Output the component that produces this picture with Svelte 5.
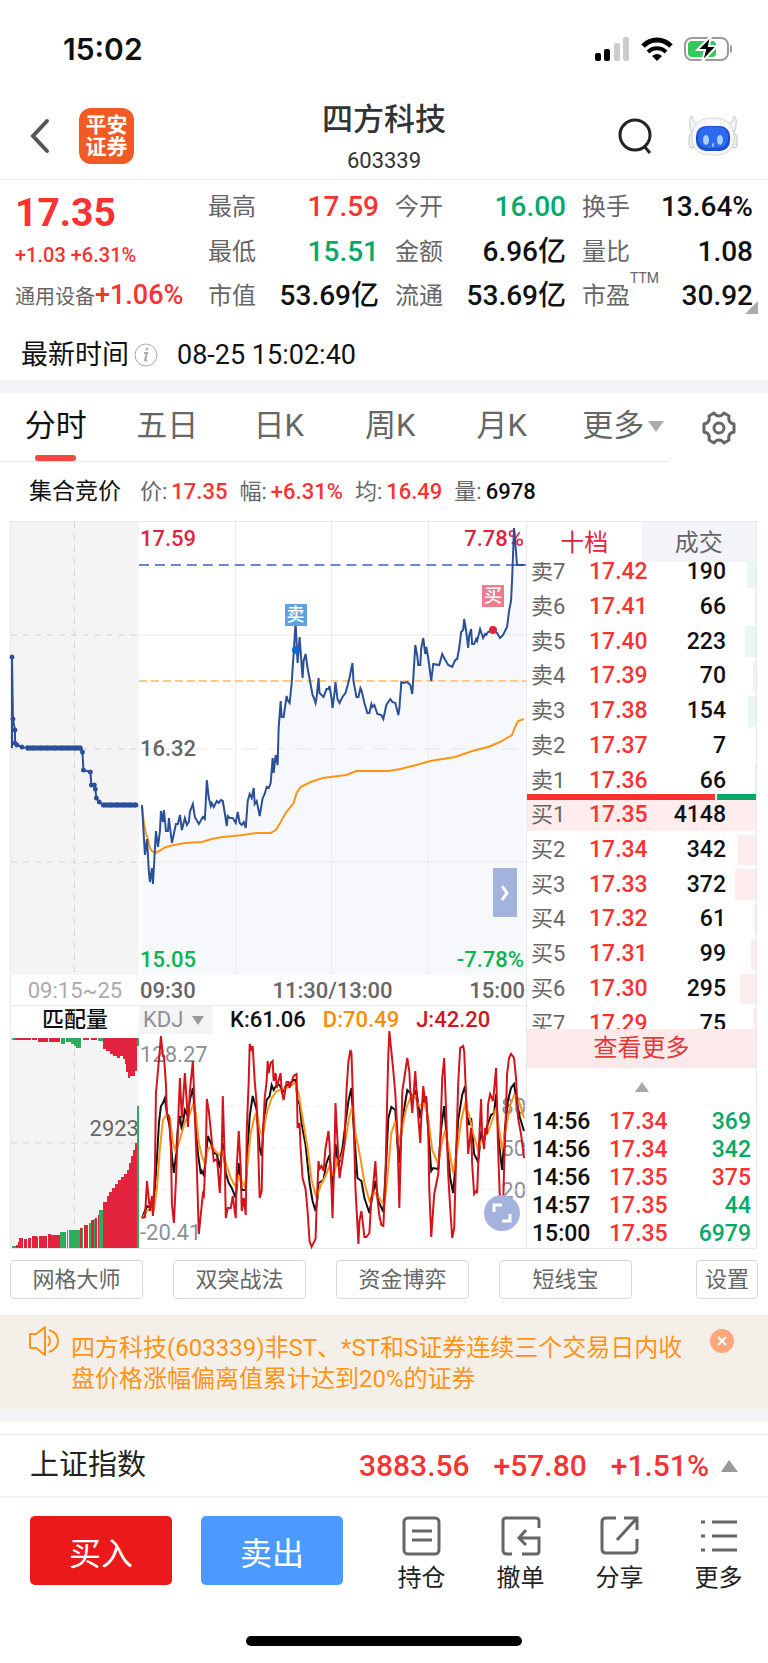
<script>
	let activeTab = $state('分时');
	let activeBook = $state('十档');
	let indicator = $state('KDJ');
	let noticeOpen = $state(true);

	const stats = [
		{ label: '最高', value: '17.59', tone: 'up' },
		{ label: '今开', value: '16.00', tone: 'down' },
		{ label: '换手', value: '13.64%' },
		{ label: '最低', value: '15.51', tone: 'down' },
		{ label: '金额', value: '6.96亿' },
		{ label: '量比', value: '1.08' },
		{ label: '市值', value: '53.69亿' },
		{ label: '流通', value: '53.69亿' },
		{ label: '市盈', value: '30.92', sup: 'TTM' }
	];

	const tabs = ['分时', '五日', '日K', '周K', '月K', '更多'];

	// depth is the bar width in percent of the panel
	const sells = [
		{ name: '卖7', price: '17.42', qty: 190, depth: 4 },
		{ name: '卖6', price: '17.41', qty: 66, depth: 1 },
		{ name: '卖5', price: '17.40', qty: 223, depth: 5 },
		{ name: '卖4', price: '17.39', qty: 70, depth: 1.5 },
		{ name: '卖3', price: '17.38', qty: 154, depth: 3.5 },
		{ name: '卖2', price: '17.37', qty: 7, depth: 0 },
		{ name: '卖1', price: '17.36', qty: 66, depth: 1 }
	];

	const buys = [
		{ name: '买1', price: '17.35', qty: 4148, depth: 100 },
		{ name: '买2', price: '17.34', qty: 342, depth: 8 },
		{ name: '买3', price: '17.33', qty: 372, depth: 9 },
		{ name: '买4', price: '17.32', qty: 61, depth: 1 },
		{ name: '买5', price: '17.31', qty: 99, depth: 2 },
		{ name: '买6', price: '17.30', qty: 295, depth: 7 },
		{ name: '买7', price: '17.29', qty: 75, depth: 1.5 }
	];

	const trades = [
		{ time: '14:56', price: '17.34', qty: 369, tone: 'down' },
		{ time: '14:56', price: '17.34', qty: 342, tone: 'down' },
		{ time: '14:56', price: '17.35', qty: 375, tone: 'up' },
		{ time: '14:57', price: '17.35', qty: 44, tone: 'down' },
		{ time: '15:00', price: '17.35', qty: 6979, tone: 'down' }
	];

	const tools = ['网格大师', '双突战法', '资金博弈', '短线宝'];

	const W = 388;
	const H = 453;

	const price =
		'3,283 5,317 6,333 8,317 10,351 11,360 13,346 14,362 16,326 17,309 19,325 21,309 22,289 24,300 25,288 27,309 29,309 30,296 33,321 37,302 39,302 41,293 43,308 46,296 48,303 50,300 51,290 54,282 56,295 60,302 64,295 66,297 67,279 68,258 70,276 72,284 73,281 75,285 78,279 80,281 82,278 84,279 86,291 88,304 89,294 91,296 94,296 97,301 99,290 101,301 103,303 105,300 107,306 109,279 111,272 113,276 115,266 116,282 118,279 121,294 124,276 126,272 128,265 130,266 132,261 134,236 135,251 137,233 139,243 140,206 142,179 143,195 145,195 148,174 149,178 151,181 153,162 155,132 157,100 159,141 161,115 164,156 165,139 167,132 169,146 172,162 174,173 175,175 177,181 178,176 180,156 181,171 185,175 188,167 190,167 191,164 193,176 194,186 196,171 197,160 199,177 201,181 204,175 207,171 209,164 211,156 214,141 215,159 218,175 220,175 222,166 223,168 226,181 229,191 231,191 233,182 234,185 236,183 239,192 243,193 245,197 248,183 252,177 254,180 257,181 260,193 261,187 263,160 265,161 269,160 272,163 274,172 275,156 277,123 279,134 280,143 282,143 283,126 285,116 287,132 288,125 290,136 293,159 295,142 301,143 304,132 306,136 310,143 314,145 317,138 319,137 321,126 323,110 325,108 326,97 328,109 330,126 331,114 333,107 334,122 336,122 338,117 339,119 342,107 345,116 347,112 348,113 350,110 355,108 359,111 362,116 365,113 369,105 371,89 373,79 374,59 376,6 377,17 379,43 386,43';

	const average =
		'3,284 5,302 7,312 9,317 11,326 13,329 16,331 20,329 27,325 35,323 46,321 63,320 73,317 84,315 104,313 118,311 132,311 137,308 141,302 147,291 152,285 155,281 158,271 162,265 172,260 184,256 208,253 218,249 250,249 262,247 278,243 292,239 317,235 334,229 350,225 362,220 374,213 377,205 380,199 386,197';

	const auction = [
		[1, 135], [2, 197], [4, 208], [4, 221], [6, 223], [11, 225], [17, 226], [23, 226], [30, 226], [37, 226],
		[44, 226], [51, 226], [58, 226], [65, 226], [70, 226], [72, 230], [73, 248], [80, 250], [81, 263], [84, 263],
		[85, 267], [86, 276], [89, 280], [93, 283], [100, 283], [107, 283], [114, 283], [120, 283], [126, 283]
	];

	const lineK =
		'3,180 8,168 11,170 15,165 18,120 20,85 22,68 24,65 26,60 28,75 31,90 33,118 35,135 37,118 39,90 41,78 43,92 46,72 49,78 51,62 54,50 56,75 59,115 62,136 63,133 65,137 67,120 69,98 72,105 75,115 78,116 81,130 84,105 87,135 90,145 93,150 97,160 100,125 103,152 107,152 109,110 111,78 114,58 118,72 121,110 123,118 125,85 128,62 131,58 133,47 135,52 138,47 141,47 144,54 147,48 151,46 155,42 157,42 159,63 161,66 163,85 167,107 171,145 174,163 177,173 179,160 180,145 185,142 188,125 191,117 194,150 197,106 200,128 204,110 208,78 210,63 213,50 215,85 219,140 223,143 226,160 231,175 234,158 237,143 240,163 245,174 248,120 250,80 253,69 257,72 259,105 261,125 263,95 266,70 269,52 272,55 275,60 278,52 282,80 285,62 288,65 291,105 293,133 295,130 300,131 303,90 306,68 309,105 312,140 315,155 317,130 320,82 324,57 327,48 329,78 331,87 333,80 336,116 340,124 343,96 346,103 349,88 353,77 356,75 358,56 361,105 364,132 367,90 370,62 373,50 376,46 379,65 382,80 386,93';

	const lineD =
		'3,180 9,172 15,172 18,150 21,110 24,82 28,76 31,80 34,105 37,114 39,108 42,98 46,84 50,78 54,67 57,75 60,105 63,118 66,126 69,112 72,108 76,112 80,117 84,113 88,128 92,140 97,149 100,138 103,143 106,149 109,125 112,95 116,78 118,74 121,92 124,98 128,75 133,60 138,53 144,51 150,49 156,45 160,55 164,80 169,110 173,142 178,160 182,148 187,138 191,128 195,138 199,122 203,120 207,102 211,78 214,68 217,95 222,120 226,145 231,163 236,154 241,160 246,167 249,140 253,95 257,83 260,105 264,90 268,70 272,60 276,57 281,68 286,65 290,80 294,112 300,126 303,108 307,92 311,112 315,135 319,112 323,82 327,66 331,77 335,95 340,112 344,101 349,96 354,83 358,70 361,90 364,112 368,90 372,68 376,57 380,60 386,80';

	const lineJ =
		'3,180 6,179 8,143 10,163 11,173 13,158 14,178 16,130 17,55 19,33 21,10 22,-2 24,18 25,18 27,46 28,76 30,78 32,110 33,166 35,185 37,143 38,116 41,40 43,80 46,35 48,66 49,89 51,53 53,33 54,23 56,76 58,130 60,196 62,176 64,156 65,158 67,116 68,61 70,73 72,93 75,123 78,121 79,130 81,155 83,110 84,58 86,123 87,180 89,170 92,170 94,158 97,180 98,130 100,93 102,130 103,173 105,160 107,177 108,93 110,43 111,6 113,13 114,8 116,43 118,66 119,93 121,160 123,153 124,103 126,60 128,43 129,23 130,35 132,25 134,23 135,43 137,35 138,50 142,35 143,53 145,62 148,44 150,44 151,50 155,38 158,36 159,90 161,85 162,110 164,140 167,151 169,173 171,203 173,209 177,201 178,170 180,123 181,131 183,128 185,133 187,110 190,93 191,106 193,150 194,180 196,116 197,65 199,103 201,140 204,121 206,106 208,53 210,23 212,12 213,15 215,76 217,150 220,206 221,183 223,173 226,199 228,199 231,195 233,160 234,156 237,123 239,160 241,178 243,187 245,188 247,143 249,53 250,16 251,-7 253,13 255,33 257,56 259,93 261,170 263,93 264,53 266,40 269,20 271,33 272,53 274,75 277,33 279,66 282,105 283,80 285,48 287,65 288,58 290,93 291,150 293,199 295,170 296,156 300,136 302,103 304,40 306,20 308,76 310,136 312,170 314,200 316,190 318,116 320,46 322,10 325,8 326,13 328,60 330,116 333,90 334,126 336,156 338,153 339,155 341,103 343,61 344,96 346,111 347,90 349,96 350,66 352,56 355,63 358,30 360,110 362,166 365,173 366,130 368,70 369,36 371,20 373,16 376,20 378,40 380,80 383,96 386,120';

	// matched volume: x, width, height, colour
	const RED = '#e2233e';
	const GREEN = '#2eae5c';
	const matched = [
		[1, 4, 2, GREEN], [5, 2, 3, RED], [7, 2, 6, RED], [8, 4, 10, RED], [13, 3, 9, RED], [17, 3, 10, RED],
		[21, 5, 12, RED], [26, 1, 11, RED], [28, 8, 12, RED], [37, 3, 14, RED], [40, 9, 13, RED], [49, 6, 16, GREEN],
		[56, 1, 18, GREEN], [58, 12, 18, GREEN], [70, 2, 20, RED], [72, 1, 20, GREEN], [74, 4, 23, RED],
		[79, 2, 25, GREEN], [81, 3, 28, RED], [84, 1, 29, GREEN], [85, 2, 30, RED], [88, 1, 33, RED], [89, 4, 38, GREEN],
		[93, 4, 46, RED], [97, 2, 52, RED], [99, 3, 56, RED], [102, 3, 60, RED], [105, 3, 64, RED], [108, 3, 68, RED],
		[111, 3, 71, RED], [114, 3, 74, RED], [117, 2, 78, RED], [119, 2, 85, RED], [121, 2, 92, RED],
		[123, 2, 98, RED], [125, 2, 105, RED], [127, 2, 142, GREEN]
	];
	const unmatched = [
		[1, 3, 2, GREEN], [4, 16, 2, RED], [21, 5, 2, RED], [27, 10, 4, RED], [38, 11, 4, RED], [50, 4, 6, GREEN],
		[55, 5, 4, GREEN], [60, 3, 6, GREEN], [63, 3, 8, GREEN], [66, 5, 10, GREEN], [73, 6, 2, RED], [81, 6, 2, RED],
		[88, 5, 3, GREEN], [93, 3, 11, RED], [96, 4, 13, RED], [100, 3, 16, RED], [103, 4, 18, RED], [107, 3, 20, RED],
		[110, 3, 18, RED], [113, 2, 21, RED], [115, 1, 26, RED], [116, 2, 34, RED], [118, 2, 40, RED], [120, 5, 38, RED],
		[125, 2, 33, RED], [127, 2, 8, GREEN]
	];

	const markers = [
		{ text: '卖', kind: 'sell', x: 157, top: 82, dot: 128 },
		{ text: '买', kind: 'buy', x: 355, top: 63, dot: 108 }
	];
</script>

{#snippet book(rows, side)}
	<table class="levels">
		<tbody>
			{#each rows as row}
				<tr>
					<th scope="row">{row.name}</th>
					<td class="price up">{row.price}</td>
					<td class="qty">
						{row.qty}
						<span class="depth {side}" style="width: {row.depth}%"></span>
					</td>
				</tr>
			{/each}
		</tbody>
	</table>
{/snippet}

<div class="page">
	<div class="status">
		<span class="clock">15:02</span>
		<span class="status-icons">
			<svg width="35" height="24" viewBox="0 0 35 24">
				<rect x="0" y="16" width="6" height="8" rx="2" />
				<rect x="9" y="12" width="6" height="12" rx="2" />
				<rect x="19" y="6" width="6" height="18" rx="2" fill="#ccc" />
				<rect x="28" y="0" width="6" height="24" rx="2" fill="#ccc" />
			</svg>
			<svg width="32" height="24" viewBox="0 0 32 24">
				<path d="M2 9C10 1 22 1 30 9" fill="none" stroke="#000" stroke-width="5" />
				<path d="M7 15C12 10 20 10 25 15" fill="none" stroke="#000" stroke-width="4" />
				<path d="M16 24L11 19Q16 15 21 19Z" />
			</svg>
			<svg width="48" height="26" viewBox="0 0 48 26">
				<rect x="1" y="2" width="43" height="22" rx="7" fill="none" stroke="#9b9b9b" stroke-width="2" />
				<rect x="4" y="5" width="28" height="16" rx="4" fill="#34c759" />
				<path d="M46 9Q49 10 49 13T46 17Z" fill="#9b9b9b" />
				<path d="M27 0L13 14H21L18 26L33 10H25Z" stroke="#fff" stroke-width="2" />
			</svg>
		</span>
	</div>

	<header>
		<div class="head-side">
			<button class="plain" aria-label="返回">
				<svg width="20" height="36" viewBox="0 0 20 36" fill="none" stroke="#555" stroke-width="4" stroke-linecap="round">
					<path d="M17 3L3 18L17 33" />
				</svg>
			</button>
			<div class="brand">平安<br />证券</div>
		</div>
		<div class="title">
			<h1>四方科技</h1>
			<p>603339</p>
		</div>
		<div class="head-side end">
			<button class="plain" aria-label="搜索">
				<svg width="36" height="38" viewBox="0 0 36 38" fill="none" stroke="#222" stroke-width="3">
					<circle cx="18" cy="18" r="15" />
					<path d="M27 29L33 36" />
				</svg>
			</button>
			<button class="plain" aria-label="助手">
				<svg width="50" height="42" viewBox="0 0 50 42">
					<path d="M4 18C0 8 2 2 4 1C5 7 7 9 12 8L10 20ZM46 18C50 8 48 2 46 1C45 7 43 9 38 8L40 20Z" fill="#f4f4f6" stroke="#c6c8ce" />
					<rect x="1" y="19" width="6" height="14" rx="3" fill="#ececef" stroke="#c4c6cc" />
					<rect x="43" y="19" width="6" height="14" rx="3" fill="#ececef" stroke="#c4c6cc" />
					<path d="M25 3C37 3 46 8 46 22C46 36 38 40 25 40S4 36 4 22C4 8 13 3 25 3Z" fill="#f8f8fa" stroke="#d6d7dd" />
					<rect x="8" y="11" width="34" height="25" rx="10" fill="#1d4fd0" />
					<rect x="10" y="12" width="30" height="21" rx="9" fill="#2c6bf0" />
					<ellipse cx="18" cy="25" rx="3" ry="5" fill="#a8d0ff" />
					<ellipse cx="32" cy="25" rx="3" ry="5" fill="#a8d0ff" />
					<ellipse cx="25" cy="30" rx="1" ry="2" fill="#a8d0ff" />
				</svg>
			</button>
		</div>
	</header>

	<section class="quote">
		<div class="last up">
			<strong>17.35</strong>
			<span class="change">+1.03 +6.31%</span>
			<span class="sector"><small>通用设备</small>+1.06%</span>
		</div>
		<dl>
			{#each stats as s}
				<div class="stat">
					<dt>{s.label}{#if s.sup}<sup>{s.sup}</sup>{/if}</dt>
					<dd class={s.tone}>{s.value}</dd>
				</div>
			{/each}
		</dl>
		<svg class="corner" width="13" height="13" viewBox="0 0 13 13"><path d="M13 0V13H0Z" fill="#aaa" /></svg>
	</section>

	<div class="updated">
		<span>最新时间</span>
		<svg width="24" height="24" viewBox="0 0 24 24" fill="none" stroke="#aaa">
			<circle cx="12" cy="12" r="11" />
			<path d="M10 10H13L11 17Q11 18 13 17" stroke-width="2" />
			<circle cx="13" cy="6" r="1" fill="#aaa" />
		</svg>
		<time>08-25 15:02:40</time>
	</div>

	<div class="band"></div>

	<div class="tabbar">
		<nav>
			{#each tabs as tab}
				<button class:active={activeTab === tab} onclick={() => (activeTab = tab)}>
					{tab}{#if tab === '更多'}<svg width="16" height="11" viewBox="0 0 16 11"><path d="M0 0H16L8 11Z" fill="#aaa" /></svg>{/if}
				</button>
			{/each}
		</nav>
		<button class="plain gear" aria-label="图表设置">
			<svg width="34" height="34" viewBox="0 0 34 34" fill="none" stroke="#666" stroke-width="3" stroke-linejoin="round">
				<path d="M12 2Q14 5 17 5T22 2L27 5Q26 10 29 12L32 13V21L29 22Q26 24 27 29L22 32Q20 29 17 29T12 32L7 29Q8 24 5 22L2 21V13L5 12Q8 10 7 5Z" />
				<circle cx="17" cy="17" r="5" />
			</svg>
		</button>
	</div>

	<div class="summary">
		<b>集合竞价</b>
		<span>价:<em class="up">17.35</em></span>
		<span>幅:<em class="up">+6.31%</em></span>
		<span>均:<em class="up">16.49</em></span>
		<span>量:<em>6978</em></span>
	</div>

	<main>
		<div class="auction">
			<div class="plot tall shaded">
				<svg viewBox="0 0 129 453" preserveAspectRatio="none">
					<path d="M64 0V453M0 113H129M0 227H129M0 340H129" stroke="#d4d4d4" stroke-dasharray="6 6" fill="none" />
					<polyline points="1,226 {auction.join(' ')}" fill="none" stroke="#2b4f98" stroke-width="2" />
					<path d="M15 226H70M93 283H126" stroke="#2b4f98" stroke-width="5" />
					{#each auction as [x, y]}
						<circle cx={x} cy={y} r="2.5" fill="#2b4f98" />
					{/each}
				</svg>
			</div>
			<div class="times light">09:15~25</div>
			<div class="subhead">匹配量</div>
			<div class="plot short shaded">
				<svg viewBox="0 0 129 210" preserveAspectRatio="none" shape-rendering="crispEdges">
					<path d="M64 0V210M0 105H129" stroke="#d4d4d4" stroke-dasharray="6 6" fill="none" />
					{#each matched as [x, w, h, fill]}
						<rect {x} y={210 - h} width={w} height={h} {fill} />
					{/each}
					{#each unmatched as [x, w, h, fill]}
						<rect {x} y="0" width={w} height={h} {fill} />
					{/each}
				</svg>
				<span class="tag volume">2923</span>
			</div>
		</div>

		<div class="intraday">
			<div class="plot tall">
				<span class="tag top left crimson">17.59</span>
				<span class="tag top right crimson">7.78%</span>
				<svg viewBox="0 0 {W} {H}" preserveAspectRatio="none">
					<polygon points="3,{H} {price} 386,{H}" fill="#f6f8fc" />
					<path d="M97 0V453M193 0V453M290 0V453M0 113H388M0 340H388" stroke="#ebebed" fill="none" />
					<path d="M0 227H388" stroke="#e6e6e8" stroke-dasharray="16 10" />
					<path d="M0 43H388" stroke="#6f86c4" stroke-width="2" stroke-dasharray="10 6" />
					<path d="M0 159H388" stroke="#ffcb80" stroke-width="2" stroke-dasharray="8 4" />
					<polyline points={average} fill="none" stroke="#ff9416" stroke-width="2" />
					<polyline points={price} fill="none" stroke="#2b4f98" stroke-width="2" />
				</svg>
				{#each markers as m}
					<span class="marker {m.kind}" style="left: {(m.x / W) * 100}%; top: {m.top}px">{m.text}</span>
					<span class="dot {m.kind}" style="left: {(m.x / W) * 100}%; top: {m.dot}px"></span>
				{/each}
				<span class="tag middle left">16.32</span>
				<span class="tag bottom left green">15.05</span>
				<span class="tag bottom right green">-7.78%</span>
				<button class="expand" aria-label="收起盘口">
					<svg width="8" height="16" viewBox="0 0 8 16" fill="none" stroke="#fff" stroke-width="3"><path d="M1 1L6 8L1 15" /></svg>
				</button>
			</div>
			<div class="times">
				<span>09:30</span>
				<span>11:30/13:00</span>
				<span>15:00</span>
			</div>
			<div class="subhead kdj">
				<label>
					<select bind:value={indicator} aria-label="指标">
						<option>KDJ</option>
						<option>MACD</option>
					</select>
					<svg width="12" height="9" viewBox="0 0 12 9"><path d="M0 0H12L6 9Z" fill="#999" /></svg>
				</label>
				<span>K:61.06</span>
				<span class="amber">D:70.49</span>
				<span class="red">J:42.20</span>
			</div>
			<div class="plot short">
				<span class="tag top left slate">128.27</span>
				<span class="tag bottom left slate">-20.41</span>
				<div class="scale"><span>80</span><span>50</span><span>20</span></div>
				<svg viewBox="0 0 {W} 210" preserveAspectRatio="none">
					<path d="M0 68H388M0 110H388M0 152H388" stroke="#ececec" stroke-dasharray="6 5" />
					<polyline points={lineK} fill="none" stroke="#111" stroke-width="2" />
					<polyline points={lineD} fill="none" stroke="#ff9416" stroke-width="2" />
					<polyline points={lineJ} fill="none" stroke="#d4141b" stroke-width="2" />
				</svg>
				<button class="rotate" aria-label="全屏">
					<svg width="20" height="20" viewBox="0 0 20 20" fill="none" stroke="#fff" stroke-width="3"><path d="M2 9V2H10M18 11V18H10" /></svg>
				</button>
			</div>
		</div>

		<div class="orderbook">
			<div class="booktabs">
				{#each ['十档', '成交'] as name}
					<button class:active={activeBook === name} onclick={() => (activeBook = name)}>{name}</button>
				{/each}
			</div>
			<div class="ladder">
				{@render book(sells, 'ask')}
				{@render book(buys, 'bid')}
				<div class="ratio"><i></i><i></i></div>
			</div>
			<button class="more">查看更多</button>
			<div class="fold">
				<svg width="14" height="10" viewBox="0 0 14 10"><path d="M7 0L14 10H0Z" fill="#aaa" /></svg>
			</div>
			<table class="trades">
				<tbody>
					{#each trades as t}
						<tr>
							<td>{t.time}</td>
							<td class="up">{t.price}</td>
							<td class="qty {t.tone}">{t.qty}</td>
						</tr>
					{/each}
				</tbody>
			</table>
		</div>
	</main>

	<div class="tools">
		{#each tools as tool}
			<button>{tool}</button>
		{/each}
		<button class="set">设置</button>
	</div>

	{#if noticeOpen}
		<div class="notice">
			<svg width="30" height="30" viewBox="0 0 30 30" fill="none" stroke="#ff9416" stroke-width="2" stroke-linejoin="round">
				<path d="M1 8H7L16 1V29L7 22H1Z" />
				<path d="M19 10Q23 15 19 20M20 4Q29 7 29 15T20 26" />
			</svg>
			<p>四方科技(603339)非ST、*ST和S证券连续三个交易日内收盘价格涨幅偏离值累计达到20%的证券</p>
			<button class="plain" aria-label="关闭" onclick={() => (noticeOpen = false)}>
				<svg width="24" height="24" viewBox="0 0 24 24">
					<circle cx="12" cy="12" r="12" fill="#ffa77c" />
					<path d="M8 8L16 16M16 8L8 16" stroke="#fff" stroke-width="2" />
				</svg>
			</button>
		</div>
	{/if}

	<div class="band"></div>

	<div class="index">
		<span class="name">上证指数</span>
		<span>3883.56</span>
		<span>+57.80</span>
		<span>+1.51%</span>
		<svg width="17" height="12" viewBox="0 0 17 12"><path d="M8 0L17 12H0Z" fill="#999" /></svg>
	</div>

	<footer>
		<button class="trade buy">买入</button>
		<button class="trade sell">卖出</button>
		<div class="actions">
			<button>
				<svg width="38" height="40" viewBox="0 0 38 40">
					<rect x="1" y="2" width="35" height="36" rx="4" />
					<path d="M9 15H29M9 24H29" />
				</svg>
				持仓
			</button>
			<button>
				<svg width="38" height="40" viewBox="0 0 38 40">
					<path d="M37 12V5Q37 2 34 2H4Q1 2 1 5V34Q1 38 5 38H10M20 38H34Q37 38 37 35V22H17M24 14L17 22L24 29" />
				</svg>
				撤单
			</button>
			<button>
				<svg width="38" height="40" viewBox="0 0 38 40">
					<path d="M15 2H5Q1 2 1 6V33Q1 37 5 37H32Q36 37 36 33V23M23 2H36V14M36 2L16 24" />
				</svg>
				分享
			</button>
			<button>
				<svg width="38" height="40" viewBox="0 0 38 40">
					<path d="M1 6H5M12 6H37M1 20H5M12 20H37M1 34H5M12 34H37" />
				</svg>
				更多
			</button>
		</div>
	</footer>

	<div class="home"></div>
</div>

<style>
	:global(body) {
		margin: 0;
		background: #fff;
	}

	.page {
		font-family: Roboto, 'Noto Sans CJK SC', sans-serif;
		color: #111;
		background: #fff;
		overflow: hidden;
	}

	.page :global(svg) {
		display: block;
		flex: none;
	}

	button {
		font-family: inherit;
		padding: 0;
		margin: 0;
		border: none;
		background: none;
		color: inherit;
		cursor: pointer;
	}

	h1, p, dl, dd {
		margin: 0;
	}

	table {
		width: 100%;
		border-collapse: collapse;
	}

	td, th {
		padding: 0;
	}

	.up {
		color: #fb3232;
	}

	.down {
		color: #06a968;
	}

	/* top */
	.status {
		display: flex;
		justify-content: space-between;
		align-items: center;
		height: 98px;
		padding: 0 36px 0 63px;
	}

	.clock {
		font: 600 30px/36px Inter, sans-serif;
	}

	.status-icons {
		display: flex;
		align-items: center;
		gap: 11px;
	}

	header {
		display: grid;
		grid-template-columns: 1fr auto 1fr;
		height: 81px;
		padding: 0 30px;
		border-bottom: 1px solid #ececee;
	}

	.head-side {
		display: flex;
		align-items: center;
		gap: 29px;
		height: 76px;
	}

	.head-side.end {
		justify-content: flex-end;
		gap: 35px;
	}

	.brand {
		width: 55px;
		padding: 6px 0;
		border-radius: 12px;
		background: #f15a22;
		color: #fff;
		font-weight: 700;
		font-size: 21px;
		line-height: 22px;
		text-align: center;
	}

	.title {
		text-align: center;
		color: #333;
	}

	.title h1 {
		font-size: 31px;
		font-weight: 500;
		line-height: 44px;
	}

	.title p {
		font-size: 22px;
		line-height: 38px;
	}

	/* quote */
	.quote {
		position: relative;
		display: grid;
		grid-template-columns: 177px 1fr;
		gap: 16px;
		padding: 5px 15px 0;
	}

	.last {
		display: flex;
		flex-direction: column;
	}

	.last strong {
		font-size: 39px;
		line-height: 56px;
	}

	.change {
		margin-bottom: 4px;
		font-size: 20px;
		font-weight: 500;
		line-height: 28px;
	}

	.sector {
		font-size: 27px;
		font-weight: 500;
		line-height: 44px;
		white-space: nowrap;
	}

	.sector small {
		font-size: 20px;
		font-weight: 400;
		color: #666;
	}

	dl {
		display: grid;
		grid-template-columns: repeat(3, 1fr);
		column-gap: 16px;
	}

	.stat {
		display: flex;
		justify-content: space-between;
		line-height: 44px;
	}

	dt {
		position: relative;
		font-size: 24px;
		color: #666;
	}

	dt sup {
		position: absolute;
		left: 100%;
		top: -6px;
		font-size: 14px;
		line-height: 20px;
	}

	dd {
		font-size: 28px;
		font-weight: 500;
	}

	.corner {
		position: absolute;
		right: 10px;
		bottom: 5px;
	}

	.updated {
		display: flex;
		align-items: center;
		gap: 5px;
		height: 51px;
		padding: 10px 21px 0;
		font-size: 27px;
		line-height: 50px;
	}

	.updated time {
		margin-left: 14px;
	}

	.band {
		height: 13px;
		background: #f2f4f8;
	}

	/* tabs */
	.tabbar {
		display: flex;
		height: 69px;
	}

	nav {
		flex: 1;
		display: flex;
		border-bottom: 1px solid #ececee;
	}

	nav button {
		flex: 1 1 0;
		display: flex;
		justify-content: center;
		align-items: center;
		gap: 4px;
		position: relative;
		font-size: 31px;
		line-height: 60px;
		color: #666;
		padding-bottom: 2px;
	}

	nav button.active {
		color: #111;
	}

	nav svg {
		margin-right: -20px;
	}

	nav button.active::after {
		content: '';
		position: absolute;
		bottom: 0;
		width: 41px;
		height: 6px;
		border-radius: 3px;
		background: #fb4343;
	}

	.gear {
		width: 99px;
		display: flex;
		justify-content: center;
		align-items: center;
	}

	.summary {
		display: flex;
		gap: 12px;
		height: 59px;
		padding-left: 29px;
		font-size: 22px;
		line-height: 60px;
		color: #666;
	}

	.summary b {
		font-size: 23px;
		font-weight: 400;
		color: #111;
		margin-right: 7px;
	}

	.summary em {
		font-style: normal;
		font-weight: 500;
		margin-left: 4px;
	}

	.summary em:not(.up) {
		color: #111;
	}

	/* charts */
	main {
		display: grid;
		grid-template-columns: 129fr 388fr 230fr;
		margin: 0 11px 0 10px;
		border: 1px solid #e8e8ea;
		border-width: 1px 0;
	}

	main > div {
		min-width: 0;
	}

	.plot {
		position: relative;
	}

	.plot > svg {
		position: relative;
		width: 100%;
		height: 100%;
		overflow: visible;
	}

	.tall {
		height: 453px;
	}

	.short {
		height: 210px;
	}

	.shaded {
		background: #f4f4f4;
	}

	.auction {
		border-left: 1px solid #e8e8ea;
	}

	.tag {
		position: absolute;
		font-size: 22px;
		line-height: 28px;
		font-weight: 500;
		color: #666;
	}

	.left {
		left: 1px;
	}

	.right {
		right: 2px;
	}

	.top {
		top: 3px;
	}

	.middle {
		top: 213px;
	}

	.bottom {
		bottom: 1px;
	}

	.crimson {
		color: #e2233e;
	}

	.green {
		color: #0cb44f;
	}

	.slate {
		color: #8e8e99;
		font-weight: 400;
	}

	.volume {
		right: 0;
		top: 77px;
		font-weight: 400;
	}

	.marker {
		position: absolute;
		width: 22px;
		margin-left: -11px;
		background: #5ea2e2;
		color: #fff;
		font-size: 18px;
		font-weight: 500;
		line-height: 22px;
		text-align: center;
	}

	.marker.buy {
		background: #ef7c8e;
	}

	.dot {
		position: absolute;
		width: 8px;
		height: 8px;
		margin: -4px 0 0 -4px;
		border-radius: 50%;
		background: #0a6ad0;
	}

	.dot.buy {
		background: #e2233e;
	}

	.expand {
		position: absolute;
		right: 9px;
		top: 346px;
		width: 24px;
		height: 49px;
		display: grid;
		place-items: center;
		background: #a3b3dd;
	}

	.times {
		display: flex;
		justify-content: space-between;
		height: 30px;
		padding: 0 1px;
		font-size: 22px;
		line-height: 32px;
		font-weight: 500;
		color: #666;
		border-bottom: 1px solid #e8e8ea;
	}

	.times.light {
		justify-content: center;
		color: #aaa;
		font-weight: 400;
	}

	.subhead {
		height: 32px;
		font-size: 22px;
		font-weight: 500;
		line-height: 28px;
		text-align: center;
	}

	.kdj {
		display: flex;
		gap: 17px;
	}

	.kdj label {
		display: flex;
		align-items: center;
		width: 74px;
		height: 28px;
		background: #f4f4f4;
	}

	.kdj select {
		appearance: none;
		width: 53px;
		padding: 0 0 0 4px;
		border: none;
		background: none;
		font: 400 22px/28px Roboto, sans-serif;
		color: #8e8e99;
	}

	.amber {
		color: #ff8c00;
	}

	.red {
		color: #d4141b;
	}

	.intraday {
		border-right: 1px solid #e8e8ea;
	}

	.scale {
		position: absolute;
		right: 0;
		top: 48px;
		display: grid;
		font-size: 22px;
		line-height: 42px;
		color: #8e8e99;
	}

	.rotate {
		position: absolute;
		right: 6px;
		bottom: 17px;
		width: 36px;
		height: 36px;
		display: grid;
		place-items: center;
		border-radius: 50%;
		background: #a3b3dd;
	}

	/* order book */
	.orderbook {
		display: flex;
		flex-direction: column;
		border-right: 1px solid #e8e8ea;
	}

	.booktabs {
		display: grid;
		grid-template-columns: 1fr 1fr;
	}

	.booktabs button {
		height: 40px;
		font-size: 24px;
		line-height: 42px;
		color: #666;
		background: #f2f4f8;
	}

	.booktabs button.active {
		background: #fff;
		color: #e2233e;
	}

	.ladder {
		position: relative;
		height: 467px;
		overflow: hidden;
	}

	.levels {
		height: 243px;
		font-size: 23px;
		line-height: 30px;
	}

	.levels:first-child {
		margin-top: -7px;
	}

	.levels tr {
		position: relative;
		z-index: 0;
	}

	.levels th {
		width: 58px;
		padding-left: 4px;
		font-size: 22px;
		font-weight: 400;
		text-align: left;
		color: #666;
	}

	.levels td {
		font-weight: 500;
	}

	.qty {
		text-align: right;
	}

	.levels .qty {
		padding-right: 30px;
	}

	.depth {
		position: absolute;
		right: 0;
		top: 2px;
		bottom: 2px;
		z-index: -1;
		background: #e9f7ee;
	}

	.depth.bid {
		background: #ffecec;
	}

	.ratio {
		position: absolute;
		top: 232px;
		left: 0;
		right: 0;
		display: grid;
		grid-template-columns: 187fr 39fr;
		gap: 2px;
		height: 6px;
		background: #fff;
	}

	.ratio i {
		background: #fb3232;
	}

	.ratio i + i {
		background: #06a968;
	}

	.more {
		height: 39px;
		background: #fce9e9;
		color: #e23a3a;
		font-size: 24px;
		line-height: 39px;
	}

	.fold {
		display: flex;
		justify-content: center;
		padding: 14px 0 16px;
	}

	.trades {
		font-size: 23px;
		line-height: 28px;
		font-weight: 500;
	}

	.trades td:first-child {
		width: 77px;
		padding-left: 5px;
	}

	.trades .qty {
		padding-right: 5px;
	}

	/* bottom */
	.tools {
		display: flex;
		gap: 30px;
		padding: 11px 10px 16px;
	}

	.tools button {
		width: 133px;
		height: 39px;
		border: 1px solid #d8d8da;
		border-radius: 4px;
		font-size: 22px;
		line-height: 37px;
		color: #666;
	}

	.tools .set {
		width: 62px;
		margin-left: auto;
	}

	.notice {
		display: flex;
		align-items: flex-start;
		padding: 11px 34px 14px 29px;
		background: #f4efe9;
		color: #ff9416;
	}

	.notice p {
		flex: 1;
		margin: 7px 20px 0 12px;
		font-size: 24px;
		line-height: 31px;
	}

	.notice button {
		margin-top: 3px;
	}

	.index {
		display: flex;
		align-items: center;
		gap: 24px;
		height: 61px;
		margin-top: 12px;
		padding: 0 30px;
		border-top: 1px solid #e8e8ea;
		border-bottom: 2px solid #f0f2f8;
		font-size: 30px;
		line-height: 61px;
		font-weight: 500;
		color: #fb3232;
	}

	.index .name {
		flex: 1;
		font-size: 29px;
		font-weight: 400;
		color: #222;
	}

	.index svg {
		margin-left: -12px;
	}

	footer {
		display: flex;
		padding: 18px 0 0 30px;
	}

	.trade {
		width: 142px;
		height: 69px;
		margin-right: 29px;
		border-radius: 5px;
		font-size: 32px;
		color: #fff;
	}

	.trade.buy {
		background: #eb1919;
	}

	.trade.sell {
		background: #4c9aff;
	}

	.actions {
		flex: 1;
		display: grid;
		grid-template-columns: repeat(4, 1fr);
	}

	.actions button {
		display: flex;
		flex-direction: column;
		align-items: center;
		font-size: 24px;
		line-height: 44px;
		color: #222;
	}

	.actions svg {
		fill: none;
		stroke: #666;
		stroke-width: 3;
		overflow: visible;
	}

	.home {
		width: 36%;
		height: 10px;
		margin: 36px auto 17px;
		border-radius: 5px;
		background: #000;
	}
</style>
